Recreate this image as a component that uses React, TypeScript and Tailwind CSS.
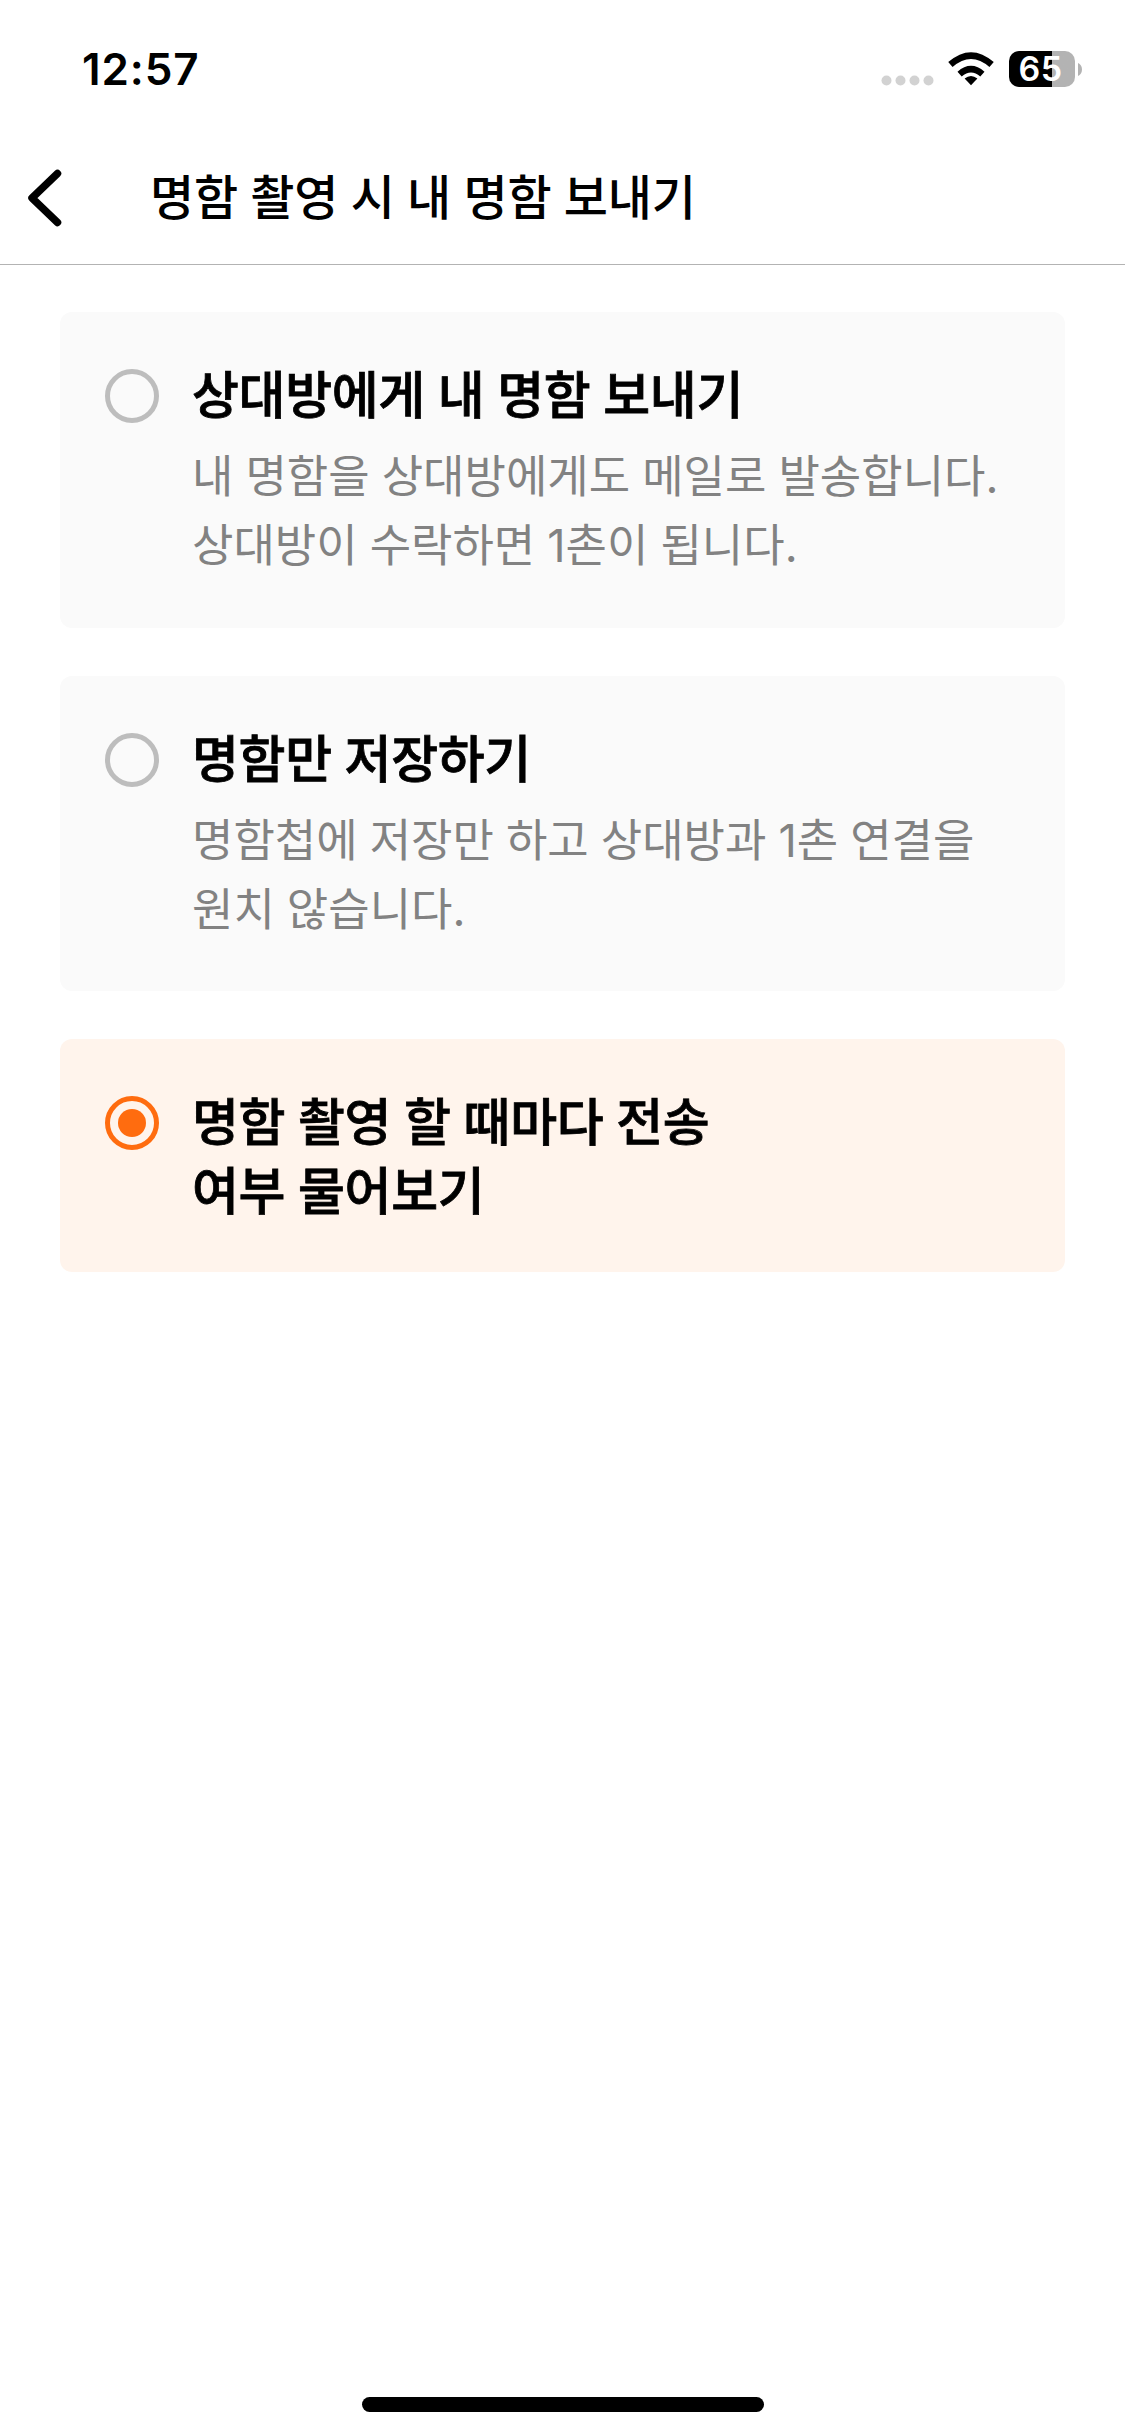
import { useState } from 'react';

const OPTIONS = [
  {
    id: 'send',
    title: ['상대방에게 내 명함 보내기'],
    description: ['내 명함을 상대방에게도 메일로 발송합니다.', '상대방이 수락하면 1촌이 됩니다.'],
    size: 'h-[316px]',
  },
  {
    id: 'save',
    title: ['명함만 저장하기'],
    description: ['명함첩에 저장만 하고 상대방과 1촌 연결을', '원치 않습니다.'],
    size: 'h-[315px]',
  },
  {
    id: 'ask',
    title: ['명함 촬영 할 때마다 전송', '여부 물어보기'],
    description: [],
    size: 'h-[233px]',
  },
];

function StatusBar() {
  return (
    <div className="flex h-[132px] items-start justify-between pt-[48px] pr-[43px] pl-[82px]">
      <span className="font-['Inter',sans-serif] text-[44px] leading-[42px] font-semibold tracking-[0.9px]">
        12:57
      </span>
      <div className="flex h-[42px] items-center">
        <svg className="mr-[14px] h-[36px] w-[53px]" viewBox="0 0 53 36" fill="#d2d2d2" aria-hidden>
          <circle cx="5.5" cy="29.5" r="5" />
          <circle cx="19.5" cy="29.5" r="5" />
          <circle cx="33.5" cy="29.5" r="5" />
          <circle cx="47.5" cy="29.5" r="5" />
        </svg>
        <svg className="mr-[15px] h-[34px] w-[46px]" viewBox="0 0 46 34" aria-hidden>
          <path d="M23 33.2 L16.6 26.6 Q23 21.4 29.4 26.6 Z" />
          <path d="M11.6 22.2 Q23 12.2 34.4 22.2" fill="none" stroke="#000" strokeWidth="6.4" />
          <path d="M2.4 12.6 Q23 -5.4 43.6 12.6" fill="none" stroke="#000" strokeWidth="6.6" />
        </svg>
        <div className="flex h-[36px] w-[66px] items-center justify-center rounded-[10px] bg-linear-to-r from-black from-65% to-[#b3b3b3] to-65%">
          <span className="pr-[3px] font-['Inter',sans-serif] text-[34px] leading-[36px] font-semibold tracking-[0.5px] text-white">
            65
          </span>
        </div>
        <svg className="ml-[3px] h-[13px] w-[4px]" viewBox="0 0 4 13" fill="#b3b3b3" aria-hidden>
          <path d="M0 0C2.4 1 4 3.5 4 6.5S2.4 12 0 13Z" />
        </svg>
      </div>
    </div>
  );
}

function Radio({ checked }: { checked: boolean }) {
  return (
    <span
      className={`flex size-[54px] shrink-0 items-center justify-center rounded-full border-[5px] ${
        checked ? 'border-[#ff6c0f]' : 'border-[#bdbdbd]'
      }`}
    >
      {checked && <span className="size-[28px] rounded-full bg-[#ff6c0f]" />}
    </span>
  );
}

export default function App() {
  const [selected, setSelected] = useState('ask');

  return (
    <div className="flex h-[2436px] w-[1125px] flex-col bg-white font-['Noto_Sans','Noto_Sans_CJK_KR',sans-serif] text-black">
      <StatusBar />

      <header className="flex h-[133px] items-center border-b border-[#b3b3b3] pl-[27px]">
        <button type="button" aria-label="뒤로">
          <svg className="h-[60px] w-[36px]" viewBox="0 0 36 60" fill="none" stroke="#000" aria-hidden>
            <path d="M30.5 5.5 L5 30 L30.5 54.5" strokeWidth="7.5" strokeLinecap="round" strokeLinejoin="round" />
          </svg>
        </button>
        <h1 className="mb-[3px] ml-[87px] text-[48px] leading-[69px] font-medium tracking-[-0.15px]">
          명함 촬영 시 내 명함 보내기
        </h1>
      </header>

      <main className="flex flex-1 flex-col gap-[48px] px-[60px] pt-[47px]">
        {OPTIONS.map((option) => (
          <button
            key={option.id}
            type="button"
            onClick={() => setSelected(option.id)}
            className={`flex items-start gap-[33px] rounded-[12px] px-[45px] pt-[57px] text-left ${option.size} ${
              selected === option.id ? 'bg-[#fff4ec]' : 'bg-[#fafafa]'
            }`}
          >
            <Radio checked={selected === option.id} />
            <span className="-mt-[9px] flex flex-col whitespace-nowrap">
              {option.title.map((line) => (
                <span
                  key={line}
                  className="text-[51px] leading-[69px] font-medium tracking-[-0.35px] [-webkit-text-stroke:0.8px_black]"
                >
                  {line}
                </span>
              ))}
              {option.description.length > 0 && (
                <span className="mt-[13px] flex flex-col font-['Inter','Noto_Sans_CJK_KR',sans-serif] text-[45px] leading-[69px] text-[#828282] [word-spacing:-0.6px]">
                  {option.description.map((line) => (
                    <span key={line}>{line}</span>
                  ))}
                </span>
              )}
            </span>
          </button>
        ))}
      </main>

      <div className="mx-auto mb-[24px] h-[15px] w-[402px] rounded-full bg-black" />
    </div>
  );
}
